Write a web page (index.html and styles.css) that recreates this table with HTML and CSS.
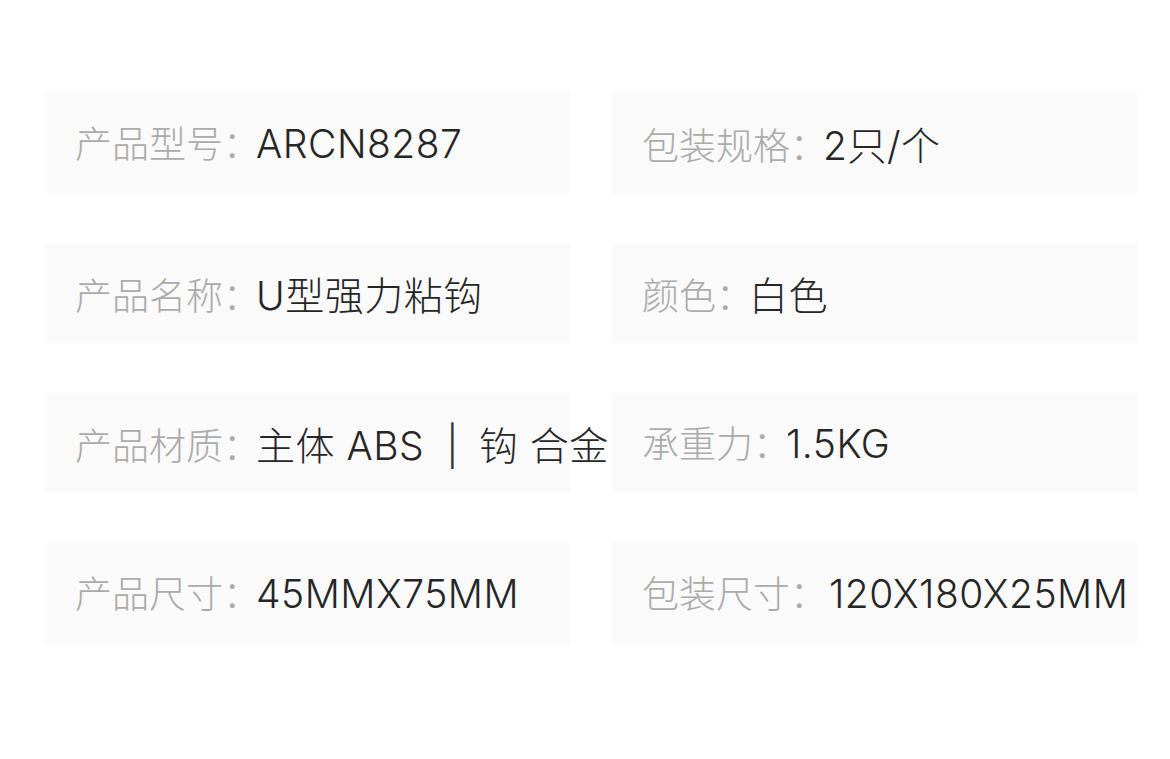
FILE: index.html
```html
<!DOCTYPE html>
<html lang="zh-CN">
<head>
<meta charset="utf-8">
<title>产品参数</title>
<link rel="stylesheet" href="styles.css">
</head>
<body>
<div class="specs">
  <div class="cell"><span class="label">产品型号：</span><span class="value">ARCN8287</span></div>
  <div class="cell"><span class="label">包装规格：</span><span class="value">2只/个</span></div>
  <div class="cell"><span class="label">产品名称：</span><span class="value">U型强力粘钩</span></div>
  <div class="cell"><span class="label">颜色：</span><span class="value">白色</span></div>
  <div class="cell"><span class="label">产品材质：</span><span class="value">主体 ABS<span class="sep">|</span>钩 合金</span></div>
  <div class="cell"><span class="label">承重力：</span><span class="value">1.5KG</span></div>
  <div class="cell"><span class="label">产品尺寸：</span><span class="value">45MMX75MM</span></div>
  <div class="cell"><span class="label">包装尺寸：</span><span class="value wide">120X180X25MM</span></div>
</div>
</body>
</html>
```

FILE: styles.css
```css
html, body {
  margin: 0;
  padding: 0;
  background: #ffffff;
}

body {
  width: 1170px;
  height: 759px;
  overflow: hidden;
}

.specs {
  display: grid;
  grid-template-columns: 525px 525px;
  grid-auto-rows: 100px;
  column-gap: 42px;
  row-gap: 50px;
  padding: 93px 0 0 45px;
}

.cell {
  background: #fafafa;
  display: flex;
  align-items: baseline;
  padding: 22px 0 0 30px;
  box-sizing: border-box;
  white-space: nowrap;
}

.label {
  font-family: "Noto Sans CJK SC", "Liberation Sans", sans-serif;
  font-weight: 300;
  font-size: 37px;
  color: #ababab;
  margin-right: -4px;
}

.value {
  font-family: "Inter", "Noto Sans CJK SC", sans-serif;
  font-weight: 300;
  font-size: 39px;
  letter-spacing: 0.5px;
  color: #262626;
}

.value.wide {
  margin-left: 6px;
}

.sep {
  display: inline-block;
  margin: 0 20px 0 22px;
  color: #333333;
}
```
